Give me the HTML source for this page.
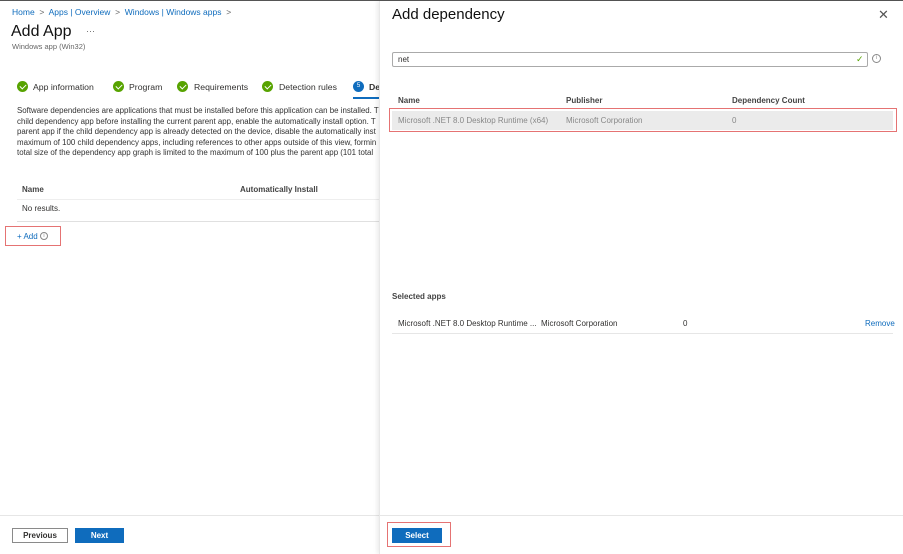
<!DOCTYPE html>
<html><head><meta charset="utf-8"><style>
*{margin:0;padding:0;box-sizing:border-box}
body{width:903px;height:554px;overflow:hidden;background:#fff;font-family:"Liberation Sans",sans-serif;color:#323130;position:relative;font-size:8px}
.a{position:absolute;white-space:nowrap}
.blue{color:#0f6cbd}
.chk{position:absolute;width:11px;height:11px;border-radius:50%;background:#57a300}
.chk:after{content:"";position:absolute;left:3.5px;top:2px;width:3px;height:5px;border:solid #fff;border-width:0 1.5px 1.5px 0;transform:rotate(45deg)}
.btn{position:absolute;height:15px;font-size:8px;font-weight:bold;text-align:center;line-height:15px}
.hd{font-weight:bold;color:#444}
.info{position:absolute;width:8px;height:8px;border:1px solid #888;border-radius:50%;font-size:5.5px;line-height:6px;text-align:center;color:#888}
</style></head><body>
<div class="a" style="left:0;top:0;width:903px;height:1px;background:#555"></div>
<div class="a blue" style="left:12px;top:7px;font-size:8.5px">Home &nbsp;<span style="color:#666">&gt;</span>&nbsp; Apps | Overview &nbsp;<span style="color:#666">&gt;</span>&nbsp; Windows | Windows apps &nbsp;<span style="color:#666">&gt;</span></div>
<div class="a" style="left:11px;top:23px;font-size:16px;color:#111">Add App</div>
<div class="a" style="left:86px;top:26px;font-size:9px;color:#666">···</div>
<div class="a" style="left:12px;top:42px;font-size:7.5px;color:#666">Windows app (Win32)</div>
<div class="chk" style="left:17px;top:81px"></div><div class="a" style="left:33px;top:82px;font-size:8.7px">App information</div>
<div class="chk" style="left:113px;top:81px"></div><div class="a" style="left:129px;top:82px;font-size:8.7px">Program</div>
<div class="chk" style="left:177px;top:81px"></div><div class="a" style="left:194px;top:82px;font-size:8.7px">Requirements</div>
<div class="chk" style="left:262px;top:81px"></div><div class="a" style="left:279px;top:82px;font-size:8.7px">Detection rules</div>
<div class="a" style="left:353px;top:81px;width:11px;height:11px;border-radius:50%;background:#0f6cbd;color:#fff;font-size:6px;text-align:center;line-height:11px">5</div>
<div class="a" style="left:369px;top:82px;font-size:8.7px;font-weight:bold">De</div>
<div class="a" style="left:353px;top:97px;width:27px;height:2px;background:#0f6cbd"></div>
<div class="a" style="left:17px;top:106px;font-size:7.9px;line-height:10.6px;color:#333;width:363px;overflow:hidden">Software dependencies are applications that must be installed before this application can be installed. T<br>child dependency app before installing the current parent app, enable the automatically install option. T<br>parent app if the child dependency app is already detected on the device, disable the automatically inst<br>maximum of 100 child dependency apps, including references to other apps outside of this view, formin<br>total size of the dependency app graph is limited to the maximum of 100 plus the parent app (101 total</div>
<div class="a hd" style="left:22px;top:185px">Name</div>
<div class="a hd" style="left:240px;top:185px">Automatically Install</div>
<div class="a" style="left:17px;top:199px;width:363px;height:1px;background:#eee"></div>
<div class="a" style="left:22px;top:204px">No results.</div>
<div class="a" style="left:17px;top:221px;width:363px;height:1px;background:#e0e0e0"></div>
<div class="a" style="left:5px;top:226px;width:56px;height:20px;border:1px solid #e57373"></div>
<div class="a blue" style="left:17px;top:232px">+ Add</div>
<div class="info" style="left:40px;top:232px">i</div>
<div class="a" style="left:0;top:515px;width:380px;height:1px;background:#e6e6e6"></div>
<div class="btn" style="left:12px;top:528px;width:56px;border:1px solid #8a8a8a;color:#323130;line-height:13px">Previous</div>
<div class="btn" style="left:75px;top:528px;width:49px;background:#0f6cbd;color:#fff">Next</div>
<div class="a" style="left:379px;top:1px;width:524px;height:553px;background:#fff;border-left:1px solid #e8e8e8;box-shadow:-2px 0 4px rgba(0,0,0,.08)"></div>
<div class="a" style="left:392px;top:6px;font-size:15px;color:#111">Add dependency</div>
<div class="a" style="left:878px;top:7px;font-size:13px;color:#555">✕</div>
<div class="a" style="left:392px;top:52px;width:476px;height:15px;border:1px solid #aaa;border-radius:2px"></div>
<div class="a" style="left:398px;top:55px">net</div>
<div class="a" style="left:856px;top:54px;color:#57a300;font-size:9px">✓</div>
<div class="info" style="left:872px;top:54px;width:9px;height:9px;line-height:7px">i</div>
<div class="a hd" style="left:398px;top:96px">Name</div>
<div class="a hd" style="left:566px;top:96px">Publisher</div>
<div class="a hd" style="left:732px;top:96px">Dependency Count</div>
<div class="a" style="left:389px;top:108px;width:508px;height:24px;border:1px solid #e57373"></div>
<div class="a" style="left:392px;top:111px;width:501px;height:19px;background:#ebebeb"></div>
<div class="a" style="left:398px;top:116px;color:#888">Microsoft .NET 8.0 Desktop Runtime (x64)</div>
<div class="a" style="left:566px;top:116px;color:#888">Microsoft Corporation</div>
<div class="a" style="left:732px;top:116px;color:#888">0</div>
<div class="a hd" style="left:392px;top:292px">Selected apps</div>
<div class="a" style="left:398px;top:319px">Microsoft .NET 8.0 Desktop Runtime ...</div>
<div class="a" style="left:541px;top:319px">Microsoft Corporation</div>
<div class="a" style="left:683px;top:319px">0</div>
<div class="a blue" style="left:865px;top:319px">Remove</div>
<div class="a" style="left:392px;top:333px;width:501px;height:1px;background:#e6e6e6"></div>
<div class="a" style="left:380px;top:515px;width:523px;height:1px;background:#e6e6e6"></div>
<div class="a" style="left:387px;top:522px;width:64px;height:25px;border:1px solid #e57373"></div>
<div class="btn" style="left:392px;top:528px;width:50px;background:#0f6cbd;color:#fff">Select</div>
</body></html>
